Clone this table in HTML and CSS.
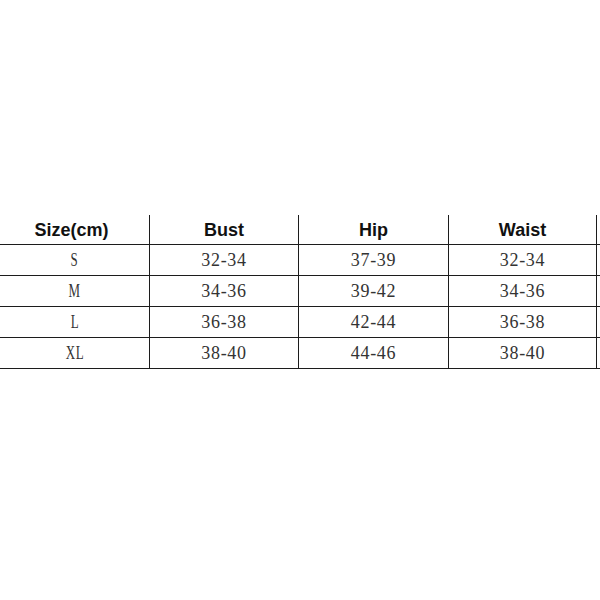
FILE: index.html
```html
<!DOCTYPE html>
<html>
<head>
<meta charset="utf-8">
<link rel="stylesheet" href="styles.css">
</head>
<body>
<div class="page">
  <div class="chart">
    <div class="cell head">Size(cm)</div>
    <div class="cell head">Bust</div>
    <div class="cell head">Hip</div>
    <div class="cell head">Waist</div>
    <div class="cell tail"></div>

    <div class="cell data"><span class="size">S</span></div>
    <div class="cell data">32-34</div>
    <div class="cell data">37-39</div>
    <div class="cell data">32-34</div>
    <div class="cell tail"></div>

    <div class="cell data"><span class="size">M</span></div>
    <div class="cell data">34-36</div>
    <div class="cell data">39-42</div>
    <div class="cell data">34-36</div>
    <div class="cell tail"></div>

    <div class="cell data"><span class="size">L</span></div>
    <div class="cell data">36-38</div>
    <div class="cell data">42-44</div>
    <div class="cell data">36-38</div>
    <div class="cell tail"></div>

    <div class="cell data"><span class="size">XL</span></div>
    <div class="cell data">38-40</div>
    <div class="cell data">44-46</div>
    <div class="cell data">38-40</div>
    <div class="cell tail"></div>
  </div>
</div>
</body>
</html>
```
FILE: styles.css
```css
html, body {
  margin: 0;
  padding: 0;
  background: #fff;
}
.page {
  width: 600px;
  height: 600px;
  overflow: hidden;
  padding-top: 215px;
  box-sizing: border-box;
}
.chart {
  display: grid;
  grid-template-columns: 150px 149px 150px 148px 20px;
  grid-template-rows: 30px 31px 31px 31px 31px;
  width: 617px;
}
.cell {
  box-sizing: border-box;
  border-right: 1px solid #1c1c1c;
  border-bottom: 1px solid #1c1c1c;
  display: flex;
  align-items: center;
  justify-content: center;
}
.tail {
  border-right: none;
}
.head {
  font-family: "Liberation Sans", Arial, sans-serif;
  font-weight: bold;
  font-size: 18px;
  color: #111;
  padding-top: 1px;
}
.head:first-child {
  padding-right: 6px;
}
.data {
  font-family: "Liberation Serif", "Times New Roman", serif;
  font-size: 18px;
  letter-spacing: 0.7px;
  color: #333;
  padding-top: 1px;
}
.size {
  display: inline-block;
  transform: scaleX(0.72);
  letter-spacing: 1px;
}
```
